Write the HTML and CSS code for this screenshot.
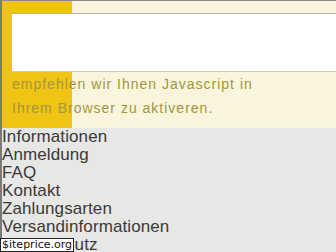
FILE: index.html
```html
<!DOCTYPE html>
<html lang="de">
<head>
    <meta charset="UTF-8">
    <meta name="viewport" content="width=device-width, initial-scale=1.0">
    <title>Shop</title>
    <link rel="stylesheet" href="styles.css">
</head>
<body>
    <div class="page">
        <div class="notice">
            <div class="notice-box"></div>
            <p class="notice-text">empfehlen wir Ihnen Javascript in<br>Ihrem Browser zu aktiveren.</p>
        </div>
        <ul class="info-links">
            <li><a href="#">Informationen</a></li>
            <li><a href="#">Anmeldung</a></li>
            <li><a href="#">FAQ</a></li>
            <li><a href="#">Kontakt</a></li>
            <li><a href="#">Zahlungsarten</a></li>
            <li><a href="#">Versandinformationen</a></li>
            <li><a href="#">Datenschutz</a></li>
        </ul>
    </div>
    <div class="badge">$iteprice.org</div>
</body>
</html>
```

FILE: styles.css
```css
html, body {
    margin: 0;
    height: 100%;
    overflow: hidden;
}

body {
    font-family: "Liberation Sans", Arial, sans-serif;
    background-color: #e7e7e6;
}

.page {
    min-height: 100%;
    border-left: 2px solid #7a7a78;
    border-top: 1px solid #8a8a86;
}

.notice {
    height: 127px;
    padding: 12px 0 0 10px;
    box-sizing: border-box;
    background: linear-gradient(to right, #f0c414 70px, #fbf5dd 70px);
}

.notice-box {
    height: 57px;
    background-color: #fff;
    border-top: 1px solid #b9b6a8;
    border-bottom: 1px solid #cfccc0;
}

.notice-text {
    margin: 0;
    font-size: 14px;
    line-height: 24px;
    letter-spacing: 1px;
    color: #a39640;
}

.info-links {
    list-style: none;
    margin: 0;
    padding: 0;
    font-size: 17px;
    line-height: 18px;
}

.info-links a {
    color: #3a3a3a;
    text-decoration: none;
    letter-spacing: 0.1px;
}

.badge {
    position: absolute;
    left: 0;
    bottom: 0;
    background: #fff;
    border: 1px solid #222;
    padding: 0 1px;
    font-family: "DejaVu Sans", sans-serif;
    font-size: 11px;
    line-height: 12px;
    color: #111;
}
```
